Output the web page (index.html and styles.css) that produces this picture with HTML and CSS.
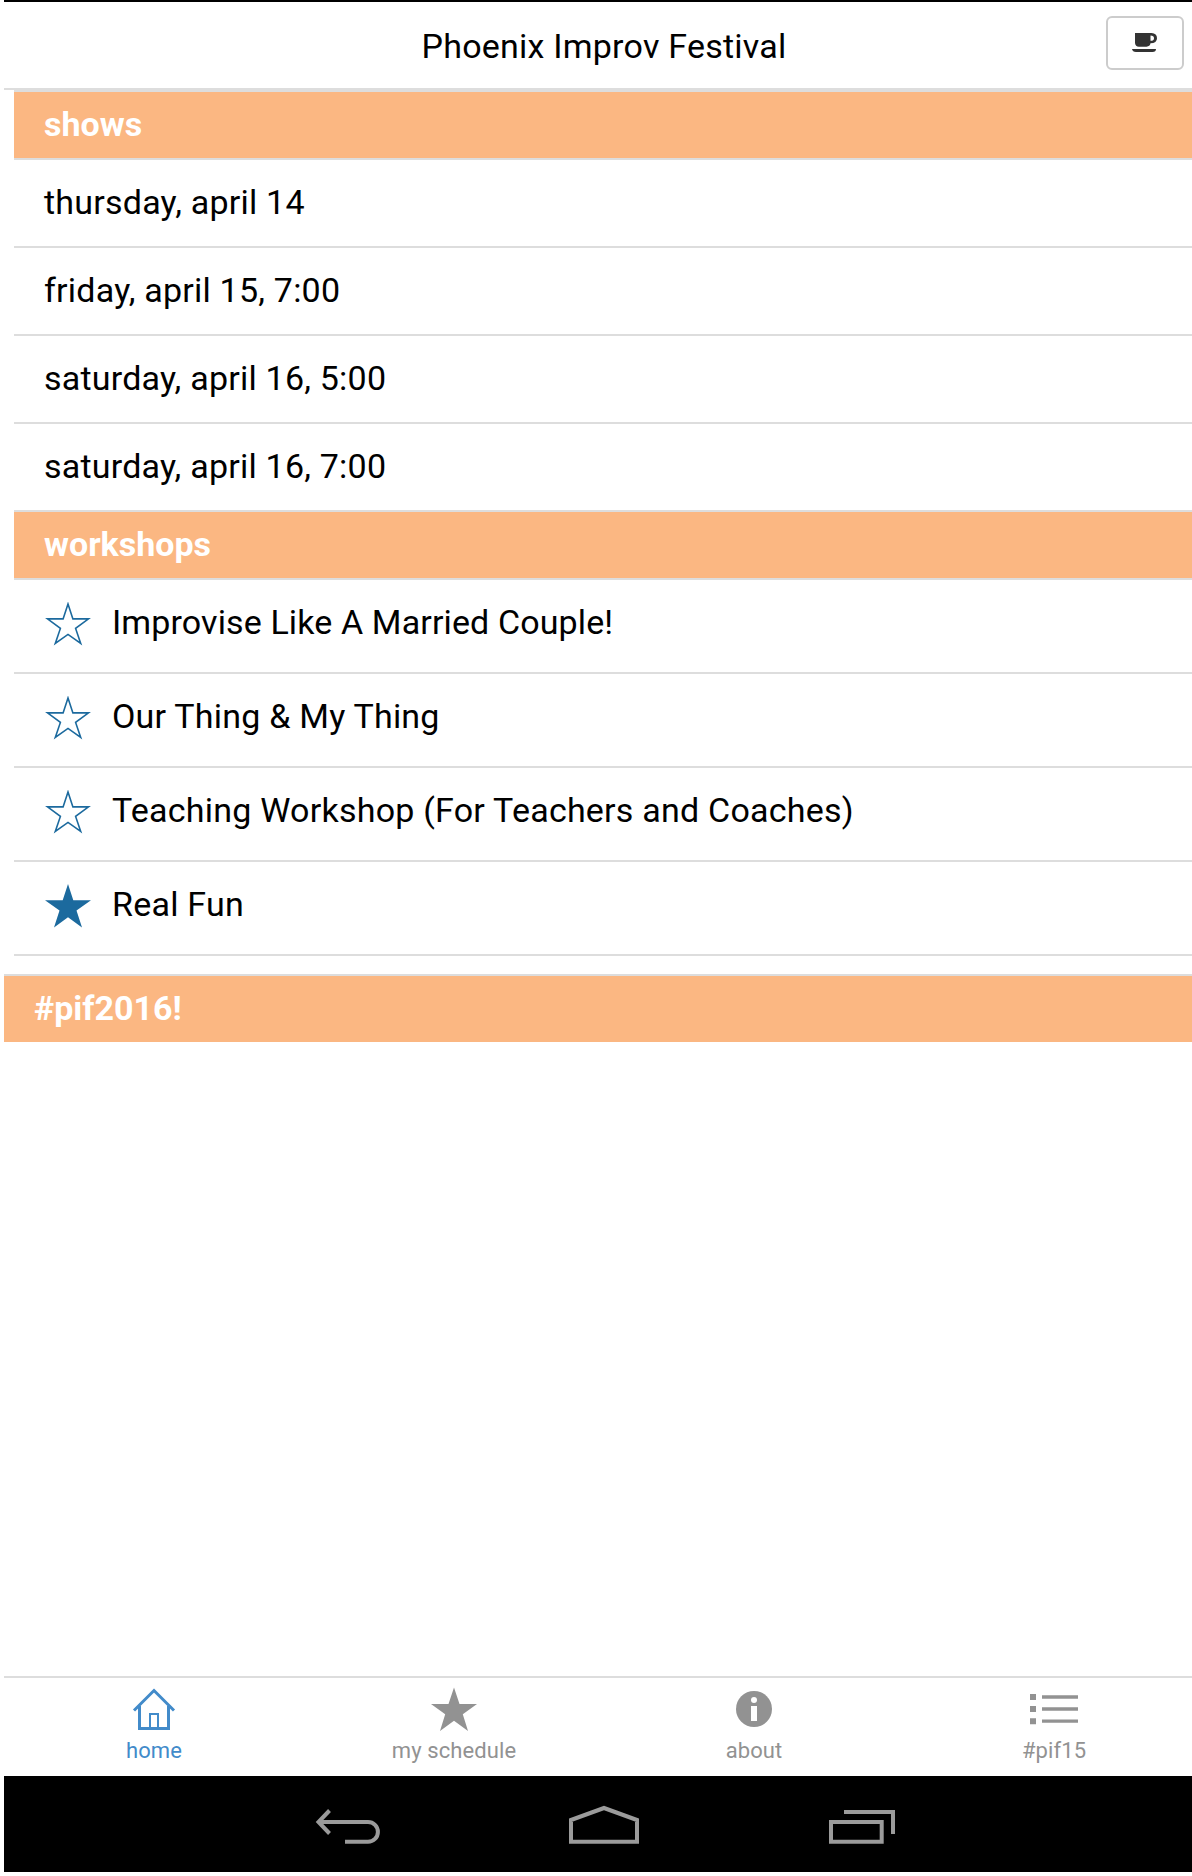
FILE: index.html
```html
<!DOCTYPE html>
<html lang="en">
<head>
<meta charset="utf-8">
<title>Phoenix Improv Festival</title>
<link rel="stylesheet" href="styles.css">
</head>
<body>
<div class="app">
  <header class="bar">
    <h1 class="title">Phoenix Improv Festival</h1>
    <button class="cup" aria-label="coffee">
      <svg width="26" height="20" viewBox="0 0 26 20"><path fill="#333" d="M3 0H19.500Q25 .3 25 5.200Q25 10 18.500 10.300Q18 13.500 14.500 13.700H7Q3.300 13.500 3 10ZM18.500 2.600V7.800Q22 7.800 22 5.200Q22 2.600 18.500 2.600ZM0 16H24Q24 18.800 20.500 19H4Q.5 18.800 0 16Z"/></svg>
    </button>
  </header>
  <main class="content">
    <section class="list">
      <h2 class="divider">shows</h2>
      <div class="item">thursday, april 14</div>
      <div class="item">friday, april 15, 7:00</div>
      <div class="item">saturday, april 16, 5:00</div>
      <div class="item">saturday, april 16, 7:00</div>
      <h2 class="divider">workshops</h2>
      <div class="item workshop snug"><svg class="star" viewBox="0 0 46 44"><use href="#outline"/></svg>Improvise Like A Married Couple!</div>
      <div class="item workshop"><svg class="star" viewBox="0 0 46 44"><use href="#outline"/></svg>Our Thing &amp; My Thing</div>
      <div class="item workshop"><svg class="star" viewBox="0 0 46 44"><path id="outline" fill="none" stroke="#1c6a9e" stroke-width="1.600" d="M23 2L27.900 16.900H43.500L30.600 26.400L35.700 41.500L23 32.400L10.300 41.500L15.400 26.400L2.500 16.900H18.100Z"/></svg>Teaching Workshop (For Teachers and Coaches)</div>
      <div class="item workshop"><svg class="star" viewBox="0 0 46 44"><path fill="#1c6a9e" d="M23 0L28.300 16.300H46L31.500 26.500L37 43.500L23 33.200L9 43.500L14.500 26.500L0 16.300H17.700Z"/></svg>Real Fun</div>
    </section>
    <h2 class="divider feed">#pif2016!</h2>
  </main>
  <nav class="tabs">
    <a class="tab active"><svg width="48" height="48" viewBox="0 0 48 48"><g fill="none" stroke="#428bca"><path stroke-width="3" d="M4 24.500L24 4.500L44 24.500M9.500 20V42.500H38.500V20"/><path stroke-width="2" d="M20 42V28H28V42"/></g></svg>home</a>
    <a class="tab"><svg width="48" height="48" viewBox="0 0 48 48"><path fill="#929292" d="M24 1.500L29.500 18H47L32.800 28.300L38 45L24 34.700L10 45L15.200 28.300L1 18H18.500Z"/></svg>my schedule</a>
    <a class="tab"><svg width="48" height="48" viewBox="0 0 48 48"><circle cx="24" cy="23" r="18" fill="#929292"/><circle cx="24" cy="14" r="3" fill="#fff"/><path fill="#fff" d="M21 20H27V35H21Z"/></svg>about</a>
    <a class="tab"><svg width="48" height="48" viewBox="0 0 48 48"><path fill="#929292" d="M0 8H6V14H0ZM12 9.300H48V12.700H12ZM0 20H6V26H0ZM12 21.300H48V24.700H12ZM0 32.300H6V38.300H0ZM12 33.500H48V36.800H12Z"/></svg>#pif15</a>
  </nav>
  <footer class="system">
    <svg viewBox="0 0 1188 96" fill="none" stroke="#9b9b9b" stroke-width="4"><path d="M325.500 34.500L314.500 46L325.500 57.500M315 46H364A9.900 9.900 0 0 1 364 65.800H341M567 65.800V44L600 32L633 44V65.800ZM827 46H877.700V65.800H827ZM840 36H889V58"/></svg>
  </footer>
</div>
</body>
</html>
```
FILE: styles.css
```css
* { box-sizing: border-box; }
body { margin: 0; background: #fff; }
.app {
  height: 1876px;
  padding: 0 0 4px 4px;
  display: flex;
  flex-direction: column;
  font-family: Roboto, sans-serif;
  font-size: 34px;
  letter-spacing: .22px;
  color: #000;
  overflow: hidden;
}
.bar {
  height: 90px;
  flex: none;
  display: grid;
  grid-template-columns: 98px 1fr 86px;
  align-items: start;
  border-top: 2px solid #000;
  border-bottom: 2px solid #ddd;
}
.title {
  grid-column: 2;
  margin: 0;
  font-size: 34px;
  font-weight: 400;
  line-height: 88px;
  text-align: center;
}
.cup {
  width: 78px;
  height: 54px;
  margin-top: 14px;
  padding: 0;
  display: grid;
  place-items: center;
  border: 2px solid #ccc;
  border-radius: 6px;
  background: #fff;
}
.content { flex: 1; }
.list { margin-left: 10px; }
.divider {
  height: 70px;
  margin: 0;
  padding-left: 30px;
  border: solid #ddd;
  border-width: 2px 0;
  background: #fbb782;
  color: #fff;
  font-size: 34px;
  font-weight: 700;
  letter-spacing: 0;
  line-height: 64px;
}
.item {
  height: 88px;
  padding-left: 30px;
  border-bottom: 2px solid #ddd;
  line-height: 84px;
}
.item:has(+ .divider) { height: 86px; border: 0; }
.workshop {
  height: 94px;
  padding-left: 31px;
  display: flex;
  gap: 21px;
}
.snug { letter-spacing: .12px; }
.star { width: 46px; height: 44px; margin-top: 22px; }
.feed { margin-top: 18px; border-bottom: 0; height: 68px; }
.tabs {
  height: 100px;
  flex: none;
  display: grid;
  grid-template-columns: repeat(4, 300px);
  border-top: 2px solid #ddd;
  overflow: hidden;
}
.tab {
  display: flex;
  flex-direction: column;
  align-items: center;
  padding-top: 8px;
  color: #929292;
  font-size: 22px;
  letter-spacing: .1px;
  line-height: 34px;
}
.active { color: #428bca; }
.tab svg { display: block; }
.system { height: 96px; flex: none; background: #000; }
.system svg { display: block; width: 1188px; height: 96px; }
```
